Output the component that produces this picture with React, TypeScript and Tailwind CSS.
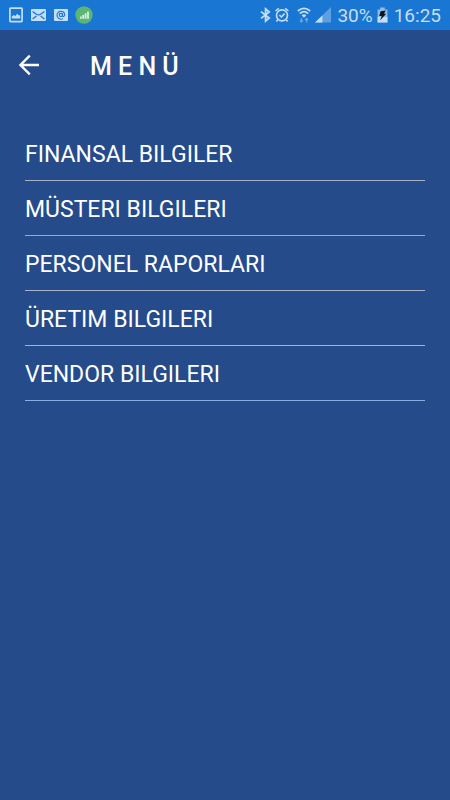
const menuItems = [
    { label: "FINANSAL BILGILER", href: "#finansal", border: "border-[#a9b0c8]" },
    { label: "MÜSTERI BILGILERI", href: "#musteri", border: "border-[#84b0e2]" },
    { label: "PERSONEL RAPORLARI", href: "#personel", border: "border-[#a9b0c8]" },
    { label: "ÜRETIM BILGILERI", href: "#uretim", border: "border-[#a9b0c8]" },
    { label: "VENDOR BILGILERI", href: "#vendor", border: "border-[#84b0e2]" },
];

const StatusBar = () => (
    <div className="flex h-[30px] items-center justify-between bg-[#1976d2] px-[9px] text-[#c5def5]">
        <div className="flex items-center gap-2">
            {/* picture */}
            <svg width="14" height="16" viewBox="0 0 14 16">
                <rect x="0.9" y="1.2" width="12.2" height="13.4" rx="0.8" fill="none" stroke="currentColor" strokeWidth="1.7" />
                <path d="M2.8 11.6V9.4L4.8 8L6.4 9L8.2 6.8L9.6 8.2L11.2 8.6V11.6Z" fill="currentColor" />
            </svg>
            {/* mail */}
            <svg width="15" height="12" viewBox="0 0 15 12">
                <rect width="15" height="12" rx="1" fill="currentColor" />
                <path d="M1.6 2.4L5.4 5.2Q7.5 6.6 9.6 5.2L13.4 2.4M1.6 10L5.4 7M13.4 10L9.6 7" fill="none" stroke="#1976d2" strokeWidth="1.3" />
            </svg>
            {/* at sign */}
            <svg width="14" height="12" viewBox="0 0 14 12">
                <rect width="14" height="12" rx="1" fill="currentColor" />
                <circle cx="6.9" cy="6" r="1.6" fill="none" stroke="#1976d2" strokeWidth="1.1" />
                <path d="M8.6 4.2V6.8Q8.8 7.8 9.8 7.4Q10.8 6.8 10.8 5.6A3.9 4 0 1 0 9 9.6" fill="none" stroke="#1976d2" strokeWidth="1.1" />
            </svg>
            <svg className="-ml-px" width="18" height="18" viewBox="0 0 18 18">
                <circle cx="9" cy="9" r="8.7" fill="#5cb573" />
                <path d="M5.8 12.8V10.4M8.2 12.8V9M10.6 12.8V7.2M13 12.8V5.4" stroke="#d9efe0" strokeWidth="1.8" />
            </svg>
        </div>
        <div className="flex items-center">
            {/* bluetooth */}
            <svg className="mr-1" width="11" height="16" viewBox="0 0 11 16">
                <path d="M1 4.6L9.2 11L5.6 14V2L9.2 5L1 11.4" fill="none" stroke="currentColor" strokeWidth="1.8" />
            </svg>
            {/* alarm */}
            <svg className="mr-2" width="14" height="16" viewBox="0 0 14 16">
                <circle cx="7" cy="8.4" r="5.5" fill="none" stroke="currentColor" strokeWidth="1.6" />
                <path d="M0.6 4L3.8 1.4M13.4 4L10.2 1.4M2.8 12.8L1.4 14.6M11.2 12.8L12.6 14.6M4.4 8.2L6.4 10L9.6 6.6" fill="none" stroke="currentColor" strokeWidth="1.6" />
            </svg>
            {/* wifi with traffic arrows */}
            <svg className="mr-1" width="14" height="16" viewBox="0 0 14 16">
                <path d="M0.8 4Q7 -1.4 13.2 4M2.8 6.6Q7 2.8 11.2 6.6" fill="none" stroke="currentColor" strokeWidth="1.7" />
                <path d="M4.6 8.2Q7 6.2 9.4 8.2L7 10.8Z" fill="currentColor" />
                <path d="M4.4 11V15M3 13.4L4.4 15L5.8 13.4M9.6 15.4V11.4M8.2 13L9.6 11.4L11 13" fill="none" stroke="#69a8e3" strokeWidth="1.3" />
            </svg>
            {/* mobile signal */}
            <svg className="mr-[6px]" width="16" height="16" viewBox="0 0 16 16">
                <path d="M0 15.6L16 0V15.6Z" fill="#5e9fdf" />
                <path d="M0 15.6L7.4 8.4V15.6Z" fill="currentColor" />
            </svg>
            <span className="pt-px text-[19px] leading-6">30%</span>
            {/* battery */}
            <svg className="ml-1 mr-[6px]" width="11" height="16" viewBox="0 0 11 16">
                <path d="M3.2 0.4H7.8V2.4H10.4V15.4H0.6V2.4H3.2Z" fill="#8dbde9" />
                <path d="M0.6 10H10.4V15.4H0.6Z" fill="currentColor" />
                <path d="M3.6 4.2L8.8 3.6L7 6.8H9.2L3 13.4L4.8 9H2.2Z" fill="#0a1524" />
            </svg>
            <span className="pt-px text-[19px] leading-6">16:25</span>
        </div>
    </div>
);

export default function App() {
    return (
        <div className="min-h-screen bg-[#254b8b] font-[Roboto,sans-serif] text-white">
            <StatusBar />
            <header className="flex h-[72px] items-center px-[18px]">
                <button type="button" aria-label="Geri" className="mr-12 flex h-6 w-6 items-center">
                    <svg className="mb-[3px]" width="22" height="22" viewBox="0 0 22 22" fill="none" stroke="currentColor" strokeWidth="2.3">
                        <path d="M21 11H2.6M11.8 1.6L2.4 11L11.8 20.4" />
                    </svg>
                </button>
                <h1 className="pt-0.5 text-[25px] font-medium leading-8">M E N Ü</h1>
            </header>
            <nav className="px-[25px] pt-6">
                <ul>
                    {menuItems.map(item => (
                        <li key={item.label} className={`border-b ${item.border}`}>
                            <a href={item.href} className="flex h-[54px] items-center pt-1 text-[23px] leading-8">{item.label}</a>
                        </li>
                    ))}
                </ul>
            </nav>
        </div>
    );
}
